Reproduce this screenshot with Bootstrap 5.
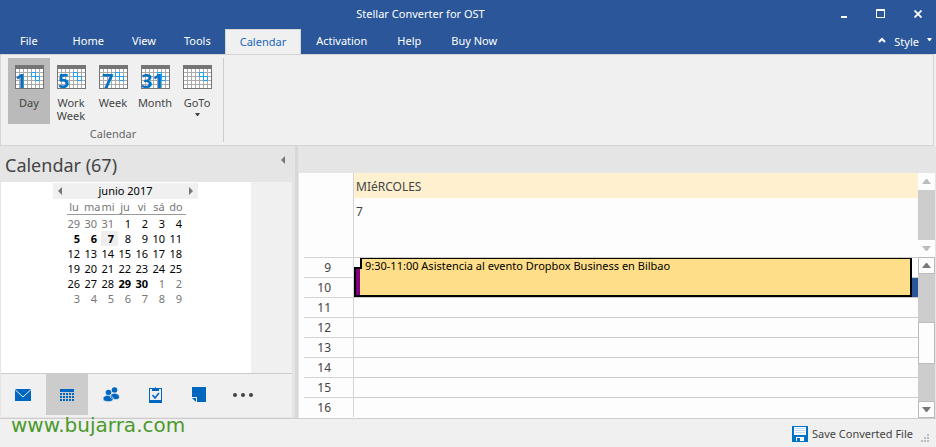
<!DOCTYPE html>
<html lang="en">
<head>
<meta charset="utf-8">
<meta name="viewport" content="width=device-width, initial-scale=1">
<title>Stellar Converter for OST</title>
<link href="https://cdn.jsdelivr.net/npm/bootstrap@5.3.0/dist/css/bootstrap.min.css" rel="stylesheet">
<style>
:root { --app-blue: #2b579a; --icon-blue: #0067c0; --line: #d4d4d4; --shade: #e5e5e5; --face: #f0f0f0; }
body { font: 11px/16px "Noto Sans", "Open Sans", sans-serif; color: #444; background: var(--face); }
button { font: inherit; color: inherit; border: 0; background: none; padding: 0; }
svg { display: block; flex: none; }
.app-head { background: var(--app-blue); color: #fff; }
.title-bar { height: 27px; padding-right: 14px; }
.title-bar h1 { font-size: 11px; line-height: 16px; }
.window-btns { gap: 29px; }
.ribbon-tabs { height: 25px; margin-top: 2px; }
.ribbon-tabs .tab-btn { padding: 0 14px 1px; color: #fff; height: 25px; }
.ribbon-tabs .tab-btn:first-child { padding: 0 21px 1px 20px; }
.ribbon-tabs .tab-btn.active { background: var(--face); color: #1a66bd; border: 1px solid var(--line); border-bottom: 0; }
.ribbon-tabs .tab-btn.active ~ .tab-btn { padding: 0 15px 1px; }
.ribbon { border: 1px solid var(--line); padding: 3px 7px; height: 92px; margin-right: 2px; }
.tool-group { border-right: 1px solid #ccc; padding-right: 5px; }
.tool-btn { width: 42px; height: 66px; padding-top: 7px; line-height: 13px; }
.tool-btn svg { margin: 0 auto 7px; overflow: visible; }
.tool-btn text { font: bold 20px "Open Sans", "Noto Sans", sans-serif; fill: #0072c6; }
.tool-btn.active { background: #bababa; }
.group-name { color: #666; line-height: 20px; }
.work-area { background: var(--shade); border-bottom: 1px solid #ccc; }
.side-panel { width: 294px; }
.panel-title { height: 36px; padding: 2px 9px 0 5px; }
.panel-title h2 { font-size: 18px; line-height: 34px; }
.panel-body { margin: 0 2px 0 1px; background: var(--face); }
.panel-white { background: #fff; width: 250px; padding-left: 52px; padding-top: 1px; }
.splitter { width: 5px; border-left: 1px solid var(--shade); border-right: 1px solid var(--shade); background: #d8d8d8; }
.month-bar { background: var(--face); color: #000; width: 145px; height: 16px; padding: 0 5px; }
.month-days { margin-left: 14px; color: #000; line-height: 15px; width: 119px; table-layout: fixed; }
.month-days th, .month-days td { padding: 0 4px 0 0; text-align: right; width: 17px; height: 15px; }
.month-days th { font-weight: 400; color: #777; text-align: center; border-bottom: 1px solid #999; padding: 0 3px 0 0; }
.month-days .gap-row td { height: 1px; }
.month-days .other { color: #777; }
.month-days .today { background: #eee; }
.nav-icons { border-top: 1px solid #ccc; background: var(--face); margin: 0 2px 1px 1px; height: 44px; padding-bottom: 2px; }
.nav-icons button { width: 44px; height: 41px; }
.nav-icons button.active { background: #ccc; width: 42px; margin: 0 1px; }
.day-view { margin: 27px 1px 0 0; background: #fdfdfd; }
.day-head { height: 84px; }
.day-corner { width: 55px; border-right: 1px solid var(--line); }
.day-name { background: #fff1d0; height: 25px; font-size: 12px; padding: 6px 2px 0; }
.day-num { font-size: 12px; padding: 6px 2px 0; }
.hour-row { height: 20px; padding-left: 5px; }
.hour-label { width: 50px; border-top: 1px solid var(--line); border-right: 1px solid var(--line); text-align: right; padding: 2px 22px 0 0; font-size: 12px; }
.hour-slot { border-top: 1px solid #ccc; }
.hour-slot.chosen { background: linear-gradient(var(--app-blue), var(--app-blue)) right / 6px 100% no-repeat; }
.event-box { position: absolute; top: 1px; left: 55px; right: 6px; height: 39px; color: #000; }
.event-mark { width: 6px; margin-top: 9px; background: #800080; border: solid #000; border-width: 2px 0 2px 2px; }
.event-text { background: #ffde8a; border: solid #000; border-width: 1px 2px 2px 0; line-height: 13px; padding-left: 5px; position: relative; }
.event-text::before { content: ""; position: absolute; left: 0; top: 0; width: 2px; height: 10px; background: #000; }
.scroll-rail { width: 17px; background: #cdcdcd; }
.scroll-rail .rail-btn { height: 17px; background: #fdfdfd; }
.scroll-rail.live .rail-btn { border: 1px solid #bbb; }
.rail-thumb { height: 42px; background: #fdfdfd; border: 1px solid #bbb; margin-top: auto; margin-bottom: 37px; }
.status-bar { height: 28px; padding-right: 5px; }
.status-bar button { padding-top: 1px; }
.site-mark { position: absolute; left: 11px; bottom: 9px; font: 20px/26px "DejaVu Sans", sans-serif; color: #4a9a2b; text-decoration: none; }
</style>
</head>
<body class="d-flex flex-column min-vh-100 position-relative">
<svg width="0" height="0" class="position-absolute" aria-hidden="true">
  <symbol id="grid" viewBox="0 0 29 24">
    <path d="M0 0h29v24H0z" fill="#757575"/><path d="M1 4h27v19H1z" fill="#fff"/>
    <path d="M4.500 4v19M8.500 4v19M12.500 4v19M16.500 4v19M20.500 4v19M24.500 4v19M1 7.500h27M1 11.500h27M1 15.500h27M1 19.500h27" stroke="#aaa" fill="none"/>
    <path d="M16.500 7.500h4v4h-4zM20.500 11.500h4v4h-4z" stroke="#1ba1f5" fill="none"/>
  </symbol>
</svg>
<header class="app-head">
  <div class="title-bar d-flex align-items-center">
    <h1 class="flex-grow-1 text-center m-0 fw-normal">Stellar Converter for OST</h1>
    <div class="window-btns d-flex align-items-center">
      <button type="button" aria-label="Minimize"><svg width="6" height="9"><path d="M0 7h6v2H0z" fill="#fff"/></svg></button>
      <button type="button" aria-label="Maximize"><svg width="9" height="9"><path d="M0 0h9v9H0zM1 2v6h7V2z" fill="#fff" fill-rule="evenodd"/></svg></button>
      <button type="button" aria-label="Close"><svg width="8" height="8"><path d="M.5 .5l7 7M7.500 .5l-7 7" stroke="#fff" stroke-width="1.800"/></svg></button>
    </div>
  </div>
  <nav class="ribbon-tabs d-flex align-items-center" aria-label="Ribbon">
    <button type="button" class="tab-btn">File</button>
    <button type="button" class="tab-btn">Home</button>
    <button type="button" class="tab-btn">View</button>
    <button type="button" class="tab-btn">Tools</button>
    <button type="button" class="tab-btn active">Calendar</button>
    <button type="button" class="tab-btn">Activation</button>
    <button type="button" class="tab-btn">Help</button>
    <button type="button" class="tab-btn">Buy Now</button>
    <button type="button" class="ms-auto me-2 pb-1" aria-label="Collapse ribbon"><svg width="8" height="6"><path d="M1 5l3-3 3 3" stroke="#fff" stroke-width="2" fill="none"/></svg></button>
    <button type="button" class="text-white d-flex pe-1">Style<svg class="ms-2 mt-1" width="5" height="3"><path d="M0 0h5L3 3H2z" fill="#fff"/></svg></button>
  </nav>
</header>
<section class="ribbon d-flex" aria-label="Calendar tools">
  <div class="tool-group">
    <div class="d-flex">
      <button type="button" class="tool-btn active d-flex flex-column align-items-center"><svg width="29" height="24"><use href="#grid"/><text x="0" y="23">1</text></svg>Day</button>
      <button type="button" class="tool-btn d-flex flex-column align-items-center"><svg width="29" height="24"><use href="#grid"/><text x="1" y="23">5</text></svg>Work<br>Week</button>
      <button type="button" class="tool-btn d-flex flex-column align-items-center"><svg width="29" height="24"><use href="#grid"/><text x="3" y="23">7</text></svg>Week</button>
      <button type="button" class="tool-btn d-flex flex-column align-items-center"><svg width="29" height="24"><use href="#grid"/><text x="0" y="23">31</text></svg>Month</button>
      <button type="button" class="tool-btn d-flex flex-column align-items-center"><svg width="29" height="24"><use href="#grid"/></svg>GoTo<span class="pt-1"><svg class="m-0" width="5" height="3"><path d="M0 0h5L3 3H2z" fill="#444"/></svg></span></button>
    </div>
    <div class="group-name text-center">Calendar</div>
  </div>
</section>
<main class="work-area d-flex flex-grow-1">
  <aside class="side-panel d-flex flex-column">
    <div class="panel-title d-flex justify-content-between">
      <h2 class="m-0 fw-normal">Calendar (67)</h2>
      <button type="button" class="align-self-start pt-2" aria-label="Collapse panel"><svg width="4" height="8"><path d="M4 0v8L0 4z" fill="#777"/></svg></button>
    </div>
    <div class="panel-body flex-grow-1 d-flex">
      <div class="panel-white">
        <div class="month-bar d-flex align-items-center justify-content-between">
          <button type="button" aria-label="Previous month"><svg width="4" height="8"><path d="M4 0v8L0 4z" fill="#777"/></svg></button>
          <span>junio 2017</span>
          <button type="button" aria-label="Next month"><svg width="4" height="8"><path d="M0 0v8l4-4z" fill="#777"/></svg></button>
        </div>
        <table class="month-days">
          <thead><tr><th>lu</th><th>ma</th><th>mi</th><th>ju</th><th>vi</th><th>sá</th><th>do</th></tr></thead>
          <tbody>
            <tr class="gap-row"><td colspan="7"></td></tr>
            <tr><td class="other">29</td><td class="other">30</td><td class="other">31</td><td>1</td><td>2</td><td>3</td><td>4</td></tr>
            <tr><td class="fw-bold">5</td><td class="fw-bold">6</td><td class="fw-bold today">7</td><td>8</td><td>9</td><td>10</td><td>11</td></tr>
            <tr><td>12</td><td>13</td><td>14</td><td>15</td><td>16</td><td>17</td><td>18</td></tr>
            <tr><td>19</td><td>20</td><td>21</td><td>22</td><td>23</td><td>24</td><td>25</td></tr>
            <tr><td>26</td><td>27</td><td>28</td><td class="fw-bold">29</td><td class="fw-bold">30</td><td class="other">1</td><td class="other">2</td></tr>
            <tr><td class="other">3</td><td class="other">4</td><td class="other">5</td><td class="other">6</td><td class="other">7</td><td class="other">8</td><td class="other">9</td></tr>
          </tbody>
        </table>
      </div>
    </div>
    <nav class="nav-icons d-flex" aria-label="Modules">
      <button type="button" aria-label="Mail" class="d-flex align-items-center justify-content-center"><svg width="16" height="12"><path d="M0 0h16v12H0z" fill="#0067c0"/><path d="M0 .5l8 7.500 8-7.500" stroke="#f0f0f0" fill="none"/></svg></button>
      <button type="button" aria-label="Calendar" class="active d-flex align-items-center justify-content-center"><svg width="14" height="12"><path d="M0 0h14v3H0zM0 4h14v8H0z" fill="#0067c0"/><path d="M2.500 4v8M5.500 4v8M8.500 4v8M11.500 4v8M0 6.500h14M0 9.500h14" stroke="#ccc" fill="none"/></svg></button>
      <button type="button" aria-label="People" class="d-flex align-items-center justify-content-center"><svg width="17" height="15"><g fill="#0067c0"><circle cx="11.500" cy="3" r="2.800"/><circle cx="5.500" cy="5.500" r="2.800"/><path d="M7 10c0-5 9-5 9.500 0 0 3-4 3-7 2zM0 12c0-5 10-5 10.500 0 0 3.500-10.500 3.500-10.500 0z" stroke="#f0f0f0" stroke-width=".7"/></g></svg></button>
      <button type="button" aria-label="Tasks" class="d-flex align-items-center justify-content-center"><svg width="13" height="16"><path d="M0 1h13v15H0zM1 2v11h11V2z" fill="#0067c0" fill-rule="evenodd"/><path d="M3 4V2h2l1.500-2L8 2h2v2z" fill="#0067c0"/><path d="M3.500 8l2.500 3 4-5" stroke="#0067c0" stroke-width="1.600" fill="none"/></svg></button>
      <button type="button" aria-label="Notes" class="d-flex align-items-center justify-content-center"><svg width="14" height="15"><path d="M0 0h14v15H5v-5H0z" fill="#0067c0"/><path d="M0 11h4v4z" fill="#0067c0"/></svg></button>
      <button type="button" aria-label="More" class="d-flex align-items-center justify-content-center"><svg width="20" height="4"><g fill="#444"><circle cx="2" cy="2" r="2"/><circle cx="10" cy="2" r="2"/><circle cx="18" cy="2" r="2"/></g></svg></button>
    </nav>
  </aside>
  <div class="splitter"></div>
  <section class="day-view flex-grow-1 d-flex flex-column" aria-label="Day view">
    <div class="day-head d-flex">
      <div class="day-corner"></div>
      <div class="flex-grow-1"><div class="day-name">MIéRCOLES</div><div class="day-num">7</div></div>
      <div class="scroll-rail d-flex flex-column justify-content-between">
        <button type="button" aria-label="Scroll up" class="rail-btn d-flex align-items-center justify-content-center"><svg width="9" height="5"><path d="M4 0h1l4 5H0z" fill="#bbb"/></svg></button>
        <button type="button" aria-label="Scroll down" class="rail-btn d-flex align-items-center justify-content-center"><svg width="9" height="5"><path d="M0 0h9L5 5H4z" fill="#bbb"/></svg></button>
      </div>
    </div>
    <div class="d-flex flex-grow-1">
      <div class="flex-grow-1 position-relative">
        <div class="hour-row d-flex"><div class="hour-label">9</div><div class="hour-slot flex-grow-1"></div></div>
        <div class="hour-row d-flex"><div class="hour-label">10</div><div class="hour-slot chosen flex-grow-1"></div></div>
        <div class="hour-row d-flex"><div class="hour-label">11</div><div class="hour-slot flex-grow-1"></div></div>
        <div class="hour-row d-flex"><div class="hour-label">12</div><div class="hour-slot flex-grow-1"></div></div>
        <div class="hour-row d-flex"><div class="hour-label">13</div><div class="hour-slot flex-grow-1"></div></div>
        <div class="hour-row d-flex"><div class="hour-label">14</div><div class="hour-slot flex-grow-1"></div></div>
        <div class="hour-row d-flex"><div class="hour-label">15</div><div class="hour-slot flex-grow-1"></div></div>
        <div class="hour-row d-flex"><div class="hour-label">16</div><div class="hour-slot flex-grow-1"></div></div>
        <div class="event-box d-flex"><div class="event-mark"></div><div class="event-text flex-grow-1">9:30-11:00 Asistencia al evento Dropbox Business en Bilbao</div></div>
      </div>
      <div class="scroll-rail live d-flex flex-column">
        <button type="button" aria-label="Earlier" class="rail-btn d-flex align-items-center justify-content-center"><svg width="9" height="5"><path d="M4 0h1l4 5H0z" fill="#777"/></svg></button>
        <div class="rail-thumb"></div>
        <button type="button" aria-label="Later" class="rail-btn d-flex align-items-center justify-content-center"><svg width="9" height="5"><path d="M0 0h9L5 5H4z" fill="#777"/></svg></button>
      </div>
    </div>
  </section>
</main>
<footer class="status-bar d-flex justify-content-end align-items-center">
  <button type="button" class="d-flex align-items-center gap-1"><svg width="16" height="16"><path d="M0 0h16v16H0z" fill="#0072c6"/><path d="M2 1h12v8H2zM4 11h8v4H4z" fill="#fff"/><path d="M3 2.500h10M3 4.500h10M3 6.500h10" stroke="#bcdcf5"/><path d="M5 12h3v3H5z" fill="#0072c6"/></svg>Save Converted File</button>
  <svg class="ms-2 align-self-end mb-1" width="10" height="9"><path d="M6 0h2v2H6zM3 3h2v2H3zM6 3h2v2H6zM0 6h2v2H0zM3 6h2v2H3zM6 6h2v2H6z" fill="#bbb"/></svg>
</footer>
<a class="site-mark" href="http://www.bujarra.com">www.bujarra.com</a>
<script src="https://cdn.jsdelivr.net/npm/bootstrap@5.3.0/dist/js/bootstrap.bundle.min.js"></script>
</body>
</html>
